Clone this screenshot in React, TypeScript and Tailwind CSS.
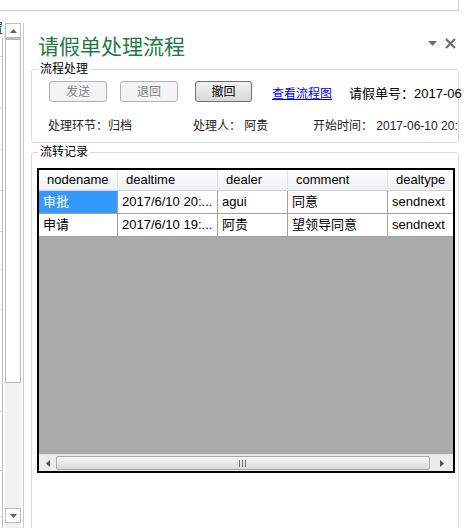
import React from "react"

const font = "font-['Liberation_Sans','Noto_Sans_CJK_SC',sans-serif]"

type Row = {
    nodename: string
    dealtime: string
    dealer: string
    comment: string
    dealtype: string
}

const rows: Row[] = [
    { nodename: "审批", dealtime: "2017/6/10 20:...", dealer: "agui", comment: "同意", dealtype: "sendnext" },
    { nodename: "申请", dealtime: "2017/6/10 19:...", dealer: "阿贵", comment: "望领导同意", dealtype: "sendnext" },
]

const headers = ["nodename", "dealtime", "dealer", "comment", "dealtype"]

// 왼쪽 잘린 표의 행 높이
const leftRowHeights = [19, 51, 42, 41, 41, 38, 40, 102, 59, 46]

const LeftStrip = () => (
    <div className="flex h-full w-[31px] shrink-0">
        <div className="flex w-[3px] flex-col overflow-hidden">
            <div className="h-[27px] shrink-0 overflow-hidden pt-[12px]">
                <span className="-ml-[9px] block text-[12px] leading-[12px] text-[#222]">置</span>
            </div>
            <div className="flex-1 border-r border-[#bcbcbc]">
                {leftRowHeights.map((h, i) => (
                    <div key={i} className="border-b border-[#d6d6d6]" style={{ height: h }} />
                ))}
            </div>
        </div>
        <div className="w-[2px]" />
        <div className="mt-[12px] flex w-[16px] flex-col bg-[#f2f2f2]">
            <div className="flex h-[15px] items-center justify-center border border-[#bdbdbd] bg-white">
                <svg width="7" height="4" viewBox="0 0 7 4">
                    <path d="M0 4 L3.5 0 L7 4 Z" fill="#606060" />
                </svg>
            </div>
            <div className="h-[345px] border border-t-2 border-[#b8b8b8] bg-white" />
            <div className="flex-1" />
            <div className="flex h-[15px] items-center justify-center border border-[#bdbdbd] bg-white">
                <svg width="7" height="4" viewBox="0 0 7 4">
                    <path d="M0 0 L7 0 L3.5 4 Z" fill="#606060" />
                </svg>
            </div>
            <div className="h-[5px]" />
        </div>
        <div className="w-[2px]" />
        <div className="mt-[12px] w-px bg-[#c8c8c8]" />
        <div className="w-[7px]" />
    </div>
)

const Legend = ({ children }: { children: React.ReactNode }) => (
    <legend className="ml-[6px] px-[2px] text-[12px] leading-[14px] text-black">{children}</legend>
)

const DisabledButton = ({ label }: { label: string }) => (
    <div className="flex h-[21px] w-[58px] shrink-0 items-center justify-center rounded-[3px] border border-[#adb2b5] bg-[#f4f4f4] text-[12px] text-[#838383]">
        {label}
    </div>
)

const DataGrid = () => (
    <div className="ml-[5px] flex h-[305px] w-[418px] flex-col border-2 border-black bg-[#ababab]">
        <div className="grid grid-cols-[79px_100px_70px_100px_100px] overflow-hidden">
            {headers.map((h) => (
                <div
                    key={h}
                    className="h-[21px] border-r border-b border-r-[#dfe1e6] border-b-[#d0d0d0] bg-linear-to-b from-white to-[#eef0f2] pl-[8px] text-[13px] leading-[20px] text-black"
                >
                    {h}
                </div>
            ))}
            {rows.map((r, i) =>
                [r.nodename, r.dealtime, r.dealer, r.comment, r.dealtype].map((v, j) => (
                    <div
                        key={`${i}-${j}`}
                        className={`h-[23px] overflow-hidden whitespace-nowrap border-r border-b border-[#a0a0a0] px-[4px] text-[13px] leading-[22px] ${
                            i === 0 && j === 0 ? "bg-[#3399ff] text-white" : "bg-white text-black"
                        }`}
                    >
                        {v}
                    </div>
                ))
            )}
        </div>
        <div className="flex-1" />
        <div className="flex h-[17px] border-t border-[#e3e3e3] bg-[#ececec]">
            <div className="flex w-[17px] items-center justify-center">
                <svg width="4" height="7" viewBox="0 0 4 7">
                    <path d="M4 0 L0 3.5 L4 7 Z" fill="#505050" />
                </svg>
            </div>
            <div className="my-[1px] flex w-[374px] items-center justify-center rounded-[2px] border border-[#a9a9a9] bg-linear-to-b from-[#f7f7f7] to-[#d9d9d9]">
                <svg width="8" height="7" viewBox="0 0 8 7">
                    <path d="M0.5 0 V7 M3.5 0 V7 M6.5 0 V7" stroke="#6e6e6e" strokeWidth="1" />
                </svg>
            </div>
            <div className="flex flex-1 items-center justify-center">
                <svg width="4" height="7" viewBox="0 0 4 7">
                    <path d="M0 0 L4 3.5 L0 7 Z" fill="#505050" />
                </svg>
            </div>
        </div>
    </div>
)

const App: React.FC = () => {
    return (
        <div className={`h-[528px] w-[468px] overflow-hidden bg-white ${font}`}>
            <div className="h-[11px] w-[459px] border-r border-b border-[#cdcdcd]" />
            <div className="flex h-[517px]">
                <LeftStrip />
                <div className="flex w-[431px] flex-col overflow-hidden">
                    <div className="flex h-[50px] shrink-0 items-start pt-[22px] pr-[6px] pl-[7px]">
                        <h1 className="text-[21px] leading-[28px] font-normal text-[#1f7a48]">请假单处理流程</h1>
                        <div className="mt-[5px] ml-auto flex h-[11px] items-center gap-[8px]">
                            <svg width="9" height="5" viewBox="0 0 9 5">
                                <path d="M0 0 L9 0 L4.5 5 Z" fill="#6e6e6e" />
                            </svg>
                            <svg width="11" height="11" viewBox="0 0 11 11">
                                <path d="M1 1 L10 10 M10 1 L1 10" stroke="#6e6e6e" strokeWidth="2.2" />
                            </svg>
                        </div>
                    </div>

                    <fieldset className="mt-[1px] w-[428px] min-w-0 shrink-0 rounded-[3px] border border-[#d5dde3] pb-[9px]">
                        <Legend>流程处理</Legend>
                        <div className="mt-[5px] flex items-start whitespace-nowrap pl-[17px]">
                            <DisabledButton label="发送" />
                            <div className="ml-[13px] shrink-0">
                                <DisabledButton label="退回" />
                            </div>
                            <div className="ml-[17px] flex h-[21px] w-[57px] shrink-0 items-center justify-center rounded-[3px] border border-[#707070] bg-linear-to-b from-[#f3f3f3] to-[#d8d8d8] text-[12px] text-black">
                                撤回
                            </div>
                            <span className="mt-[6px] ml-[20px] shrink-0 text-[12px] leading-[14px] text-[#0000ff] underline">查看流程图</span>
                            <span className="mt-[5px] ml-[17px] shrink-0 text-[13px] leading-[15px] text-black">请假单号：2017-06-10001</span>
                        </div>
                        <div className="mt-[17px] flex overflow-hidden whitespace-nowrap pl-[16px] text-[12px] leading-[14px] text-[#222]">
                            <span className="w-[145px] shrink-0">处理环节：归档</span>
                            <span className="w-[120px] shrink-0">处理人： 阿贵</span>
                            <span className="shrink-0">开始时间： 2017-06-10 20:15:32</span>
                        </div>
                    </fieldset>

                    <fieldset className="mt-[2px] h-[420px] w-[428px] min-w-0 shrink-0 rounded-[3px] border border-[#d5dde3]">
                        <Legend>流转记录</Legend>
                        <div className="mt-[9px]">
                            <DataGrid />
                        </div>
                    </fieldset>
                </div>
            </div>
        </div>
    )
}

export default App
